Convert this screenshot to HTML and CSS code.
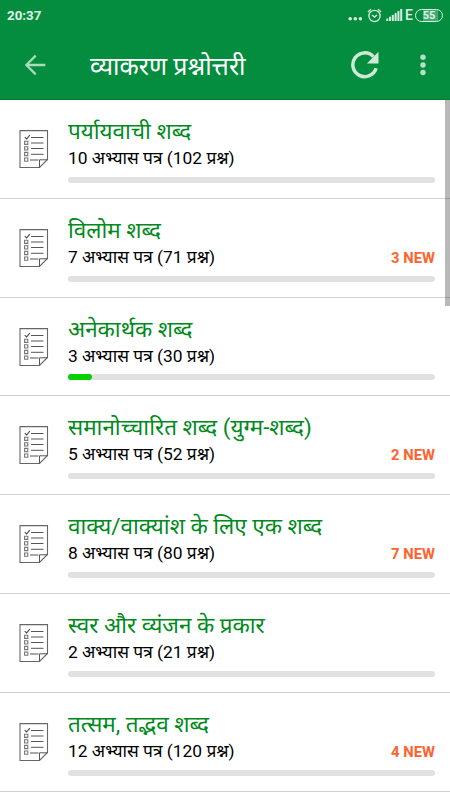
FILE: index.html
```html
<!DOCTYPE html>
<html lang="hi">
<head>
<meta charset="utf-8">
<title>व्याकरण प्रश्नोत्तरी</title>
<link rel="stylesheet" href="styles.css">
</head>
<body>
<svg class="defs" aria-hidden="true">
  <symbol id="sheet" viewBox="0 0 30 38">
    <path d="M1 .6H28.5V29.5L20.5 37.5H1Z" fill="#fff" stroke="#666" stroke-width="1.1"/>
    <path d="M20.5 37.5V29.8H28.5" fill="none" stroke="#555" stroke-width="1"/>
    <path d="M12 7.5H24.5M12 13H24.5M12 18.5H24.5M12 24.3H24.5M11 30H19.5" stroke="#555" stroke-width="1"/>
    <path d="M5.6 11.2h3.2v3.2H5.6zM5.6 16.8h3.2V20H5.6zM5.6 22.4h3.2v3.2H5.6zM5.6 28h3.2v3.2H5.6z" fill="none" stroke="#777" stroke-width="1.1"/>
    <path d="M5.8 7.2L7.6 9L10.8 5.2" fill="none" stroke="#444" stroke-width="1.1"/>
  </symbol>
</svg>
<header class="header">
  <div class="status">
    <span class="clock">20:37</span>
    <div class="indicators">
      <svg width="16" height="14" viewBox="0 0 16 14" fill="#d9eedf"><circle cx="2.2" cy="10.8" r="1.8"/><circle cx="7.3" cy="10.8" r="1.8"/><circle cx="12.4" cy="10.8" r="1.8"/></svg>
      <svg class="alarm" width="15" height="15" viewBox="0 0 15 15" fill="none" stroke="#d9eedf" stroke-width="1.3"><circle cx="7.5" cy="8" r="5.6"/><path d="M.9 4L4 1.2M14.1 4L11 1.2M5 7L7.5 9.1L10 7"/></svg>
      <svg class="signal" width="17" height="14" viewBox="0 0 17 14" fill="#d9eedf"><path d="M.3 10.5h2V13h-2zM3 8.8h2V13H3zM5.8 7h2v6h-2zM8.6 5h2v8h-2zM11.4 3h2v10h-2zM14.2 1h2v12h-2z"/></svg>
      <span class="net">E</span>
      <span class="battery">55</span>
    </div>
  </div>
  <div class="toolbar">
    <svg class="back" width="22" height="22" viewBox="0 0 22 22" fill="none" stroke="#a9dcb9" stroke-width="2.3"><path d="M20.3 11H1.7M10.7 1.6L1.3 11L10.7 20.4"/></svg>
    <h1 class="heading">व्याकरण प्रश्नोत्तरी</h1>
    <svg class="refresh" width="28" height="28" viewBox="0 0 28 28"><path d="M25.1 17.3A11.9 11.9 0 1 1 22.4 5.6" fill="none" stroke="#cdead7" stroke-width="3.5"/><path d="M27.5 .8V12.4H15.9Z" fill="#cdead7"/></svg>
    <svg class="more" width="6" height="22" viewBox="0 0 6 22" fill="#b8e0c5"><circle cx="3" cy="3.3" r="2.7"/><circle cx="3" cy="11" r="2.7"/><circle cx="3" cy="18.5" r="2.7"/></svg>
  </div>
</header>
<main class="list">
  <section class="row"><svg class="icon"><use href="#sheet"/></svg><div class="body"><h2 class="title">पर्यायवाची शब्द</h2><div class="meta"><span>10 अभ्यास पत्र (102 प्रश्न)</span></div><div class="bar"></div></div></section>
  <section class="row"><svg class="icon"><use href="#sheet"/></svg><div class="body"><h2 class="title">विलोम शब्द</h2><div class="meta"><span>7 अभ्यास पत्र (71 प्रश्न)</span><b class="new">3 NEW</b></div><div class="bar"></div></div></section>
  <section class="row"><svg class="icon"><use href="#sheet"/></svg><div class="body"><h2 class="title">अनेकार्थक शब्द</h2><div class="meta"><span>3 अभ्यास पत्र (30 प्रश्न)</span></div><div class="bar"><div class="fill" style="width:6.6%"></div></div></div></section>
  <section class="row"><svg class="icon"><use href="#sheet"/></svg><div class="body"><h2 class="title">समानोच्चारित शब्द (युग्म-शब्द)</h2><div class="meta"><span>5 अभ्यास पत्र (52 प्रश्न)</span><b class="new">2 NEW</b></div><div class="bar"></div></div></section>
  <section class="row"><svg class="icon"><use href="#sheet"/></svg><div class="body"><h2 class="title">वाक्य/वाक्यांश के लिए एक शब्द</h2><div class="meta"><span>8 अभ्यास पत्र (80 प्रश्न)</span><b class="new">7 NEW</b></div><div class="bar"></div></div></section>
  <section class="row"><svg class="icon"><use href="#sheet"/></svg><div class="body"><h2 class="title">स्वर और व्यंजन के प्रकार</h2><div class="meta"><span>2 अभ्यास पत्र (21 प्रश्न)</span></div><div class="bar"></div></div></section>
  <section class="row"><svg class="icon"><use href="#sheet"/></svg><div class="body"><h2 class="title">तत्सम, तद्भव शब्द</h2><div class="meta"><span>12 अभ्यास पत्र (120 प्रश्न)</span><b class="new">4 NEW</b></div><div class="bar"></div></div></section>
  <div class="scrollbar"></div>
</main>
</body>
</html>
```
FILE: styles.css
```css
* { box-sizing: border-box; }
body {
  margin: 0;
  height: 800px;
  overflow: hidden;
  background: #fff;
  font-family: Roboto, "Noto Sans", sans-serif;
}
h1, h2 { margin: 0; font-weight: 400; }
svg { display: block; flex: none; }
.defs { position: absolute; width: 0; height: 0; }

.header {
  height: 100px;
  background: #048d3e;
  border-bottom: 1px solid #047c30;
}
.status {
  display: flex;
  align-items: center;
  justify-content: space-between;
  height: 30px;
  padding: 0 7px;
  color: #e0f2e6;
}
.clock { padding-top: 1px; font-size: 13.3px; font-weight: 700; line-height: 30px; }
.indicators { display: flex; align-items: center; }
.alarm { margin-left: 3px; }
.signal { margin-left: 4px; }
.net { margin-left: 2px; font-size: 14px; font-weight: 500; }
.battery {
  width: 28px;
  height: 13px;
  margin-left: 2px;
  border: 1px solid #e0f2e6;
  border-radius: 7px;
  background: linear-gradient(90deg, #048d3e 0 25%, #43aa6e 25% 85%, #048d3e 85%);
  font-size: 11px;
  font-weight: 700;
  line-height: 12px;
  text-align: center;
}
.toolbar {
  display: flex;
  align-items: center;
  height: 70px;
  padding: 0 24px 0 25px;
}
.heading {
  flex: 1;
  margin: 3px 0 0 43px;
  color: #fff;
  font-size: 25px;
  line-height: 36px;
  white-space: nowrap;
}
.refresh { margin-right: 41px; }

.list { position: relative; }
.row {
  display: flex;
  height: 98.8px;
  padding: 0 15px 0 19px;
  border-bottom: 1px solid #d2d2d2;
}
.icon { width: 30px; height: 38px; margin-top: 30px; }
.body { flex: 1; margin-left: 19px; padding-top: 15px; }
.title {
  color: #008a1c;
  font-size: 22.45px;
  line-height: 32px;
  white-space: nowrap;
}
.meta {
  display: flex;
  justify-content: space-between;
  height: 23px;
  margin-bottom: 6.9px;
  color: #000;
  font-size: 17.4px;
  line-height: 22.4px;
}
.new { color: #ff622d; font-size: 14.8px; font-weight: 700; line-height: 24px; }
.bar { height: 6px; border-radius: 3px; background: #e1e1e1; }
.fill { height: 6px; border-radius: 3px; background: #00d200; }
.scrollbar {
  position: absolute;
  top: 0;
  right: 0;
  width: 5px;
  height: 206px;
  background: rgba(0, 0, 0, .28);
}
```
